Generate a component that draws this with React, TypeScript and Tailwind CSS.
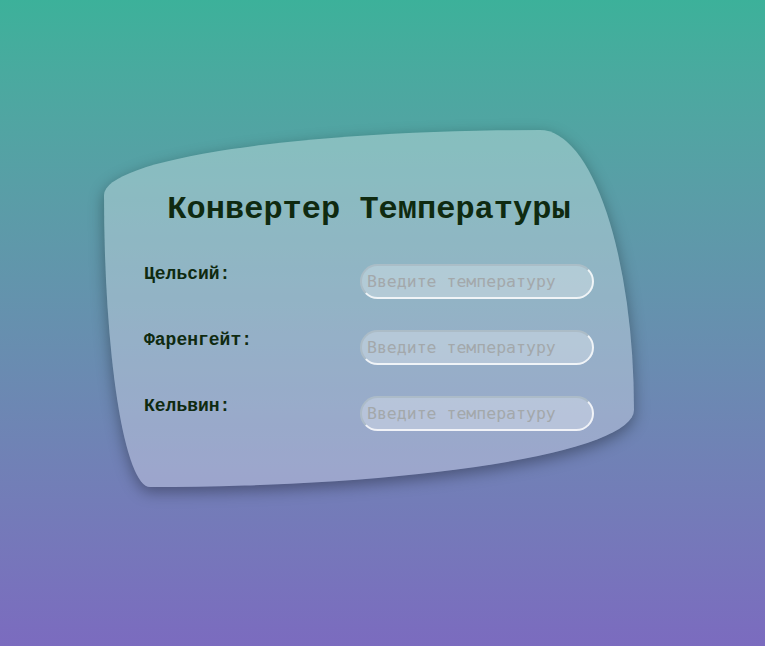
export default function App() {
  const rows = ['Цельсий:', 'Фаренгейт:', 'Кельвин:'];

  return (
    <div className="min-h-screen w-full bg-linear-to-b from-[#3cb19a] to-[#7b6bbf] pt-[130px] pl-[104px]">
      <div
        className="w-[530px] h-[357px] bg-white/30 px-[40px] pt-[62px] rounded-[436px_94px_484px_46px/65px_280px_77px_292px] shadow-[0_5px_15px_rgba(0,0,0,0.35)]"
        style={{ fontFamily: '"Liberation Mono", "Courier New", monospace' }}
      >
        <h1 className="text-center text-[32px] leading-[36px] font-bold text-[#0f2a10] mb-[36px]">
          Конвертер Температуры
        </h1>

        <div className="flex flex-col gap-[31px]">
          {rows.map((label) => (
            <div key={label} className="flex items-start justify-between">
              <label className="text-[18px] leading-[20px] font-bold text-[#0f2a10]">{label}</label>
              <input
                type="text"
                placeholder="Введите температуру"
                className="w-[234px] h-[35px] rounded-full border-2 border-t-[#a9b9c0]/70 border-l-[#a9b9c0]/70 border-b-white/80 border-r-white/80 bg-white/30 px-[5px] text-[16.5px] text-[#333] placeholder:text-[#a3a8ab] outline-none"
                style={{ fontFamily: '"DejaVu Sans Mono", monospace' }}
              />
            </div>
          ))}
        </div>
      </div>
    </div>
  );
}
